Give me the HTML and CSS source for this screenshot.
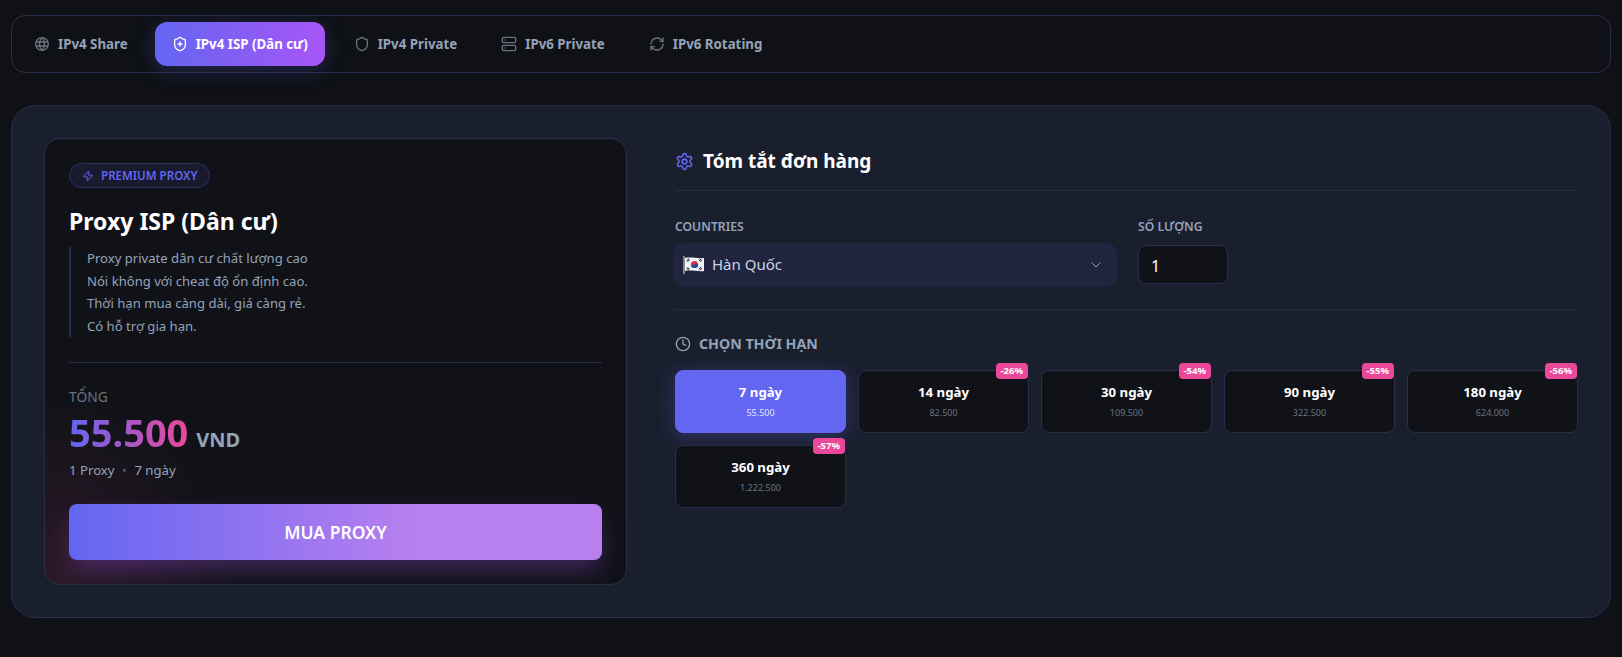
FILE: index.html
```html
<!DOCTYPE html>
<html lang="vi">
<head>
  <meta charset="UTF-8" />
  <meta name="viewport" content="width=device-width, initial-scale=1.0"/>
  <title>Proxy ISP</title>
  <link rel="stylesheet" href="styles.css">
</head>
<body>
  <nav class="tabs">
    <a class="tab">
      <svg class="icon" viewBox="0 0 24 24"><circle cx="12" cy="12" r="9.5"/><path d="M3.6 9h16.8M3.6 15h16.8M11.5 2.5a17 17 0 0 0 0 19M12.5 2.5a17 17 0 0 1 0 19"/></svg>
      IPv4 Share
    </a>
    <a class="tab active">
      <svg class="icon" viewBox="0 0 24 24"><path d="M20 13c0 5-3.5 7.5-7.66 8.95a1 1 0 0 1-.67-.01C7.5 20.5 4 18 4 13V6a1 1 0 0 1 1-1c2 0 4.5-1.2 6.24-2.72a1.17 1.17 0 0 1 1.52 0C14.51 3.81 17 5 19 5a1 1 0 0 1 1 1z"/><path d="M9 12h6M12 9v6"/></svg>
      IPv4 ISP (Dân cư)
    </a>
    <a class="tab">
      <svg class="icon" viewBox="0 0 24 24"><path d="M20 13c0 5-3.5 7.5-7.66 8.95a1 1 0 0 1-.67-.01C7.5 20.5 4 18 4 13V6a1 1 0 0 1 1-1c2 0 4.5-1.2 6.24-2.72a1.17 1.17 0 0 1 1.52 0C14.51 3.81 17 5 19 5a1 1 0 0 1 1 1z"/></svg>
      IPv4 Private
    </a>
    <a class="tab">
      <svg class="icon" viewBox="0 0 24 24"><rect x="2" y="2" width="20" height="8" rx="2"/><rect x="2" y="14" width="20" height="8" rx="2"/><path d="M6 6h.01M6 18h.01"/></svg>
      IPv6 Private
    </a>
    <a class="tab">
      <svg class="icon" viewBox="0 0 24 24"><path d="M3 12a9 9 0 0 1 9-9 9.75 9.75 0 0 1 6.74 2.74L21 8"/><path d="M21 3v5h-5"/><path d="M21 12a9 9 0 0 1-9 9 9.75 9.75 0 0 1-6.74-2.74L3 16"/><path d="M8 16H3v5"/></svg>
      IPv6 Rotating
    </a>
  </nav>

  <main class="panel">
    <section class="product">
      <span class="badge">
        <svg class="icon" viewBox="0 0 24 24"><path d="M4 14a1 1 0 0 1-.78-1.63l9.9-10.2a.5.5 0 0 1 .86.46l-1.92 6.02A1 1 0 0 0 13 10h7a1 1 0 0 1 .78 1.63l-9.9 10.2a.5.5 0 0 1-.86-.46l1.92-6.02A1 1 0 0 0 11 14z"/></svg>
        PREMIUM PROXY
      </span>
      <h1>Proxy ISP (Dân cư)</h1>
      <div class="desc">
        <p>Proxy private dân cư chất lượng cao</p>
        <p>Nói không với cheat độ ổn định cao.</p>
        <p>Thời hạn mua càng dài, giá càng rẻ.</p>
        <p>Có hỗ trợ gia hạn.</p>
      </div>
      <div class="total">
        <div class="total-label">TỔNG</div>
        <div class="price"><span class="amount">55.500</span><span class="currency">VND</span></div>
        <div class="total-meta">1 Proxy <i>•</i> 7 ngày</div>
      </div>
      <button class="buy">MUA PROXY</button>
    </section>

    <section class="order">
      <h2>
        <svg class="icon" viewBox="0 0 24 24"><path d="M12.22 2h-.44a2 2 0 0 0-2 2v.18a2 2 0 0 1-1 1.73l-.43.25a2 2 0 0 1-2 0l-.15-.08a2 2 0 0 0-2.73.73l-.22.38a2 2 0 0 0 .73 2.73l.15.1a2 2 0 0 1 1 1.72v.51a2 2 0 0 1-1 1.74l-.15.09a2 2 0 0 0-.73 2.73l.22.38a2 2 0 0 0 2.73.73l.15-.08a2 2 0 0 1 2 0l.43.25a2 2 0 0 1 1 1.73V20a2 2 0 0 0 2 2h.44a2 2 0 0 0 2-2v-.18a2 2 0 0 1 1-1.73l.43-.25a2 2 0 0 1 2 0l.15.08a2 2 0 0 0 2.73-.73l.22-.39a2 2 0 0 0-.73-2.73l-.15-.08a2 2 0 0 1-1-1.74v-.5a2 2 0 0 1 1-1.74l.15-.09a2 2 0 0 0 .73-2.73l-.22-.38a2 2 0 0 0-2.73-.73l-.15.08a2 2 0 0 1-2 0l-.43-.25a2 2 0 0 1-1-1.73V4a2 2 0 0 0-2-2z"/><circle cx="12" cy="12" r="3"/></svg>
        Tóm tắt đơn hàng
      </h2>

      <div class="fields">
        <div class="field-country">
          <label>COUNTRIES</label>
          <div class="select">
            <svg class="flag" viewBox="0 0 22 20">
              <path d="M1 1v18" stroke="#e5e7eb" stroke-width="1"/>
              <path d="M2 3c6-1.500 13 1 19 0v13c-6 1-13-1.500-19 0z" fill="#f3f4f6"/>
              <circle cx="11.500" cy="9.500" r="3.600" fill="#d32f45"/>
              <path d="M7.900 9.500a3.600 3.600 0 0 0 7.200 0c-.9-1.500-2.700-1.500-3.600 0s-2.700 1.500-3.600 0z" fill="#1f4e9c"/>
              <path d="M3.500 5.500l2.500-1.800M4.300 6.600l2.500-1.800M16.500 3.900l2.500 1.800M15.700 5l2.500 1.800M3.500 13.500l2.500 1.800M4.300 12.400l2.500 1.800M16.500 15.100l2.500-1.800M15.700 14l2.500-1.800" stroke="#1f2937" stroke-width="1"/>
            </svg>
            <span>Hàn Quốc</span>
            <svg class="icon chevron" viewBox="0 0 24 24"><path d="m6 9 6 6 6-6"/></svg>
          </div>
        </div>
        <div class="field-qty">
          <label for="qty">SỐ LƯỢNG</label>
          <input id="qty" type="text" value="1" />
        </div>
      </div>

      <div class="duration-title">
        <svg class="icon" viewBox="0 0 24 24"><circle cx="12" cy="12" r="10"/><path d="M12 6v6l4 2"/></svg>
        CHỌN THỜI HẠN
      </div>
      <div class="durations">
        <div class="duration selected"><b>7 ngày</b><small>55.500</small></div>
        <div class="duration"><em>-26%</em><b>14 ngày</b><small>82.500</small></div>
        <div class="duration"><em>-54%</em><b>30 ngày</b><small>109.500</small></div>
        <div class="duration"><em>-55%</em><b>90 ngày</b><small>322.500</small></div>
        <div class="duration"><em>-56%</em><b>180 ngày</b><small>624.000</small></div>
        <div class="duration"><em>-57%</em><b>360 ngày</b><small>1.222.500</small></div>
      </div>
    </section>
  </main>
</body>
</html>
```

FILE: styles.css
```css
* {
  box-sizing: border-box;
  margin: 0;
  padding: 0;
}

body {
  font-family: 'Noto Sans', 'Open Sans', sans-serif;
  background: #0f1117;
  color: #fff;
  padding: 15px 11px;
}

.icon {
  width: 16px;
  height: 16px;
  flex-shrink: 0;
  fill: none;
  stroke: currentColor;
  stroke-width: 2;
  stroke-linecap: round;
  stroke-linejoin: round;
}

/* tabs */
.tabs {
  display: flex;
  gap: 12px;
  padding: 6px;
  border: 1px solid #2a2d4a;
  border-radius: 14px;
  margin-bottom: 32px;
}

.tab {
  display: flex;
  align-items: center;
  gap: 8px;
  height: 44px;
  padding: 0 16px;
  border-radius: 12px;
  font-size: 13.300px;
  font-weight: 700;
  color: #94a3b8;
}

.tab .icon {
  color: #6b7280;
}

.tab.active {
  margin: 0 1px 0 -1px;
  padding: 0 17px;
  color: #fff;
  background: linear-gradient(90deg, #6366f1, #a855f7);
  box-shadow: 0 4px 20px rgba(99, 102, 241, 0.25);
}

.tab.active .icon {
  color: #fff;
}

/* main panel */
.panel {
  display: grid;
  grid-template-columns: 583px 1fr;
  gap: 48px;
  height: 513px;
  padding: 32px;
  background: #1a1f2e;
  border: 1px solid #2a2d4a;
  border-radius: 24px;
}

.product {
  padding: 24px;
  background: radial-gradient(circle 190px at 0% 100%, rgba(236, 72, 153, 0.13), transparent), #111218;
  border: 1px solid #2a2d4a;
  border-radius: 16px;
  overflow: hidden;
}

.badge {
  display: inline-flex;
  align-items: center;
  gap: 7px;
  height: 25px;
  padding: 0 12px;
  background: rgba(99, 102, 241, 0.1);
  border: 1px solid #2f3060;
  border-radius: 20px;
  font-size: 11.600px;
  font-weight: 600;
  color: #6366f1;
}

.badge .icon {
  width: 12px;
  height: 12px;
}

h1 {
  margin: 17px 0 10px;
  font-size: 23px;
  line-height: 32px;
  font-weight: 700;
}

.desc {
  padding-left: 16px;
  border-left: 2px solid #2a2d4a;
  font-size: 13.100px;
  line-height: 22.500px;
  color: #94a3b8;
}

.total {
  margin-top: 25px;
  padding-top: 24px;
  border-top: 1px solid #2a2d4a;
}

.total-label {
  font-size: 13.800px;
  line-height: 20px;
  color: #6b7280;
}

.price {
  display: flex;
  align-items: baseline;
  gap: 8px;
  height: 40px;
  margin-top: 5px;
  line-height: 40px;
}

.amount {
  font-size: 38px;
  font-weight: 700;
  background: linear-gradient(90deg, #6366f1, #ec4899);
  -webkit-background-clip: text;
  background-clip: text;
  color: transparent;
}

.currency {
  font-size: 20px;
  font-weight: 700;
  color: #94a3b8;
}

.total-meta {
  margin-top: 8px;
  font-size: 13.200px;
  line-height: 20px;
  color: #94a3b8;
}

.total-meta i {
  margin: 0 4px;
  font-style: normal;
  color: #4b5563;
}

.buy {
  display: block;
  width: 100%;
  height: 56px;
  margin-top: 24px;
  border: none;
  border-radius: 8px;
  background: linear-gradient(90deg, #6366f1, #b87fef 65%);
  box-shadow: 0 12px 26px -4px rgba(168, 85, 247, 0.35);
  font-family: inherit;
  font-size: 17.500px;
  font-weight: 600;
  color: #fff;
}

/* order summary */
.order {
  padding-top: 8px;
}

h2 {
  display: flex;
  align-items: center;
  gap: 9px;
  padding-bottom: 14px;
  border-bottom: 1px solid #2a2d4a;
  font-size: 19px;
  line-height: 30px;
  font-weight: 700;
}

h2 .icon {
  width: 19px;
  height: 19px;
  color: #6366f1;
}

.fields {
  display: flex;
  gap: 22px;
  padding: 27px 0 22px;
  border-bottom: 1px solid #2a2d4a;
}

.fields label {
  display: block;
  height: 17px;
  font-size: 12.200px;
  line-height: 17px;
  font-weight: 600;
  color: #94a3b8;
}

.field-country {
  width: 441px;
}

.select {
  display: flex;
  align-items: center;
  width: 444px;
  height: 44px;
  margin: 8px 0 0 -2px;
  padding: 0 13px 0 10px;
  background: #20243f;
  border-radius: 10px;
  font-size: 15px;
  line-height: 20px;
  color: #cbd5e1;
}

.select span {
  margin-top: -2px;
}

.flag {
  width: 22px;
  height: 20px;
  margin-right: 7px;
}

.chevron {
  margin-left: auto;
  stroke-width: 1.500;
  color: #94a3b8;
}

.field-qty input {
  display: block;
  width: 90px;
  height: 39px;
  margin-top: 10px;
  padding: 2px 12px 0;
  background: #111218;
  border: 1px solid #2a2d4a;
  border-radius: 8px;
  font-family: inherit;
  font-size: 16px;
  color: #fff;
}

.duration-title {
  display: flex;
  align-items: center;
  gap: 8px;
  margin: 24px 0 16px;
  font-size: 14.200px;
  line-height: 20px;
  font-weight: 700;
  color: #94a3b8;
}

.duration-title .icon {
  color: #94a3b8;
}

.durations {
  display: grid;
  grid-template-columns: repeat(5, 1fr);
  gap: 12px;
}

.duration {
  position: relative;
  display: flex;
  flex-direction: column;
  align-items: center;
  justify-content: center;
  gap: 5px;
  height: 63px;
  padding-bottom: 2px;
  background: #111218;
  border: 1px solid #2a2d4a;
  border-radius: 8px;
}

.duration b {
  font-size: 13.200px;
  line-height: 18px;
}

.duration small {
  font-size: 9px;
  line-height: 13px;
  color: #6b7280;
}

.duration em {
  position: absolute;
  top: -8px;
  right: 0;
  padding: 0 5px;
  background: #ec4899;
  border-radius: 4px;
  font-style: normal;
  font-size: 9.500px;
  line-height: 16px;
  font-weight: 700;
}

.duration.selected {
  background: #6366f1;
  border-color: #6366f1;
  box-shadow: 0 4px 20px rgba(99, 102, 241, 0.3);
}

.duration.selected small {
  color: #e0e7ff;
}
```
